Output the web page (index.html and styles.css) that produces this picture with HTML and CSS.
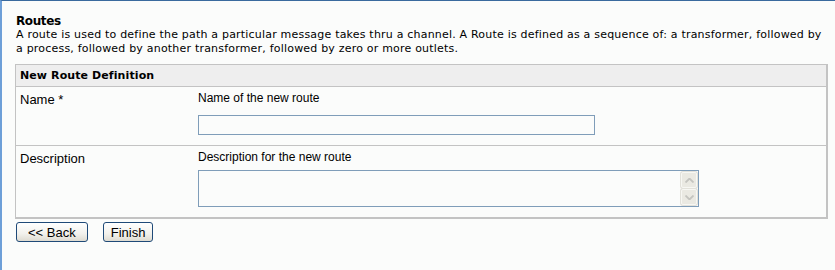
FILE: index.html
```html
<!DOCTYPE html>
<html lang="en">
<head>
    <meta charset="UTF-8">
    <title>Routes</title>
    <link rel="stylesheet" href="styles.css">
</head>
<body>
    <div class="page">
        <h1 class="title">Routes</h1>
        <p class="intro">A route is used to define the path a particular message takes thru a channel. A Route is defined as a sequence of: a transformer, followed by a process, followed by another transformer, followed by zero or more outlets.</p>

        <table class="form-table">
            <tr>
                <th colspan="2">New Route Definition</th>
            </tr>
            <tr>
                <td class="label">Name *</td>
                <td class="field">
                    <div class="hint">Name of the new route</div>
                    <input type="text" class="text-input">
                </td>
            </tr>
            <tr>
                <td class="label">Description</td>
                <td class="field">
                    <div class="hint hint-short">Description for the new route</div>
                    <div class="textbox">
                        <textarea class="text-area"></textarea>
                        <div class="scrollbar">
                            <div class="scroll-btn">
                                <svg width="9" height="5" viewBox="0 0 9 5"><path d="M0.5 4.5 L4.5 0.5 L8.5 4.5" fill="none" stroke="#c4c4bf" stroke-width="1.8"/></svg>
                            </div>
                            <div class="scroll-btn">
                                <svg width="9" height="5" viewBox="0 0 9 5"><path d="M0.5 0.5 L4.5 4.5 L8.5 0.5" fill="none" stroke="#c4c4bf" stroke-width="1.8"/></svg>
                            </div>
                        </div>
                    </div>
                </td>
            </tr>
        </table>

        <div class="buttons">
            <button class="btn btn-back">&lt;&lt; Back</button>
            <button class="btn">Finish</button>
        </div>
    </div>
</body>
</html>
```

FILE: styles.css
```css
html, body {
    height: 100%;
}

body {
    margin: 0;
    background-color: #fbfcfb;
    border-top: 1px solid #3a6a9e;
    border-left: 2px solid #6d9fd8;
    box-sizing: border-box;
    color: #000;
    font-family: "DejaVu Sans", Verdana, sans-serif;
}

.page {
    padding: 13px 7px 0 14px;
}

.title {
    margin: 0;
    font-size: 12px;
    font-weight: bold;
    letter-spacing: -0.4px;
    line-height: 14px;
}

.intro {
    margin: 0 0 8px 0;
    font-size: 11px;
    letter-spacing: 0.2px;
    line-height: 14px;
}

.form-table {
    width: 813px;
    margin-left: -1px;
    border-collapse: separate;
    border-spacing: 0;
    border: 1px solid #c3c3c3;
    border-right-width: 2px;
    border-bottom-width: 2px;
}

.form-table th {
    height: 21px;
    padding: 0 4px;
    background-color: #eeeeee;
    border-bottom: 1px solid #c3c3c3;
    text-align: left;
    font-size: 11px;
    font-weight: bold;
    letter-spacing: 0.1px;
}

.form-table td {
    padding: 4px 4px 10px 4px;
    vertical-align: top;
    font-family: "Liberation Sans", Arial, sans-serif;
    font-size: 12px;
    line-height: 15px;
}

.form-table tr:nth-child(2) td {
    border-bottom: 1px solid #c3c3c3;
}

.form-table td.label {
    width: 170px;
    font-size: 13px;
    padding-top: 5px;
}

.hint {
    margin-bottom: 9px;
}

.hint-short {
    margin-bottom: 5px;
}

.text-input {
    display: block;
    box-sizing: border-box;
    width: 397px;
    height: 20px;
    margin: 0;
    border: 1px solid #7f9db9;
    background: #fbfcfb;
}

.textbox {
    display: flex;
    box-sizing: border-box;
    width: 501px;
    height: 37px;
    border: 1px solid #7f9db9;
    background: #fbfcfb;
}

.text-area {
    flex: 1;
    border: none;
    background: transparent;
    resize: none;
    margin: 0;
    padding: 0;
    overflow: hidden;
}

.scrollbar {
    display: flex;
    flex-direction: column;
    gap: 1px;
    width: 16px;
    padding: 1px 1px 0 0;
}

.scroll-btn {
    display: flex;
    align-items: center;
    justify-content: center;
    height: 16px;
    box-sizing: border-box;
    border: 1px solid #f7f7f3;
    border-radius: 2px;
    background: #eae9e2;
    box-shadow: 0 0 0 1px #e2e1da;
}

.buttons {
    display: flex;
    gap: 15px;
    margin-top: 3px;
}

.btn {
    height: 20px;
    padding: 0 7px 0 7px;
    border: 1px solid #1f4a78;
    border-radius: 3px;
    background: linear-gradient(#ffffff, #f2f1ec 60%, #dedbd1);
    font-family: "Liberation Sans", Arial, sans-serif;
    font-size: 13px;
    color: #000;
}

.btn-back {
    padding: 0 11px;
}
```
